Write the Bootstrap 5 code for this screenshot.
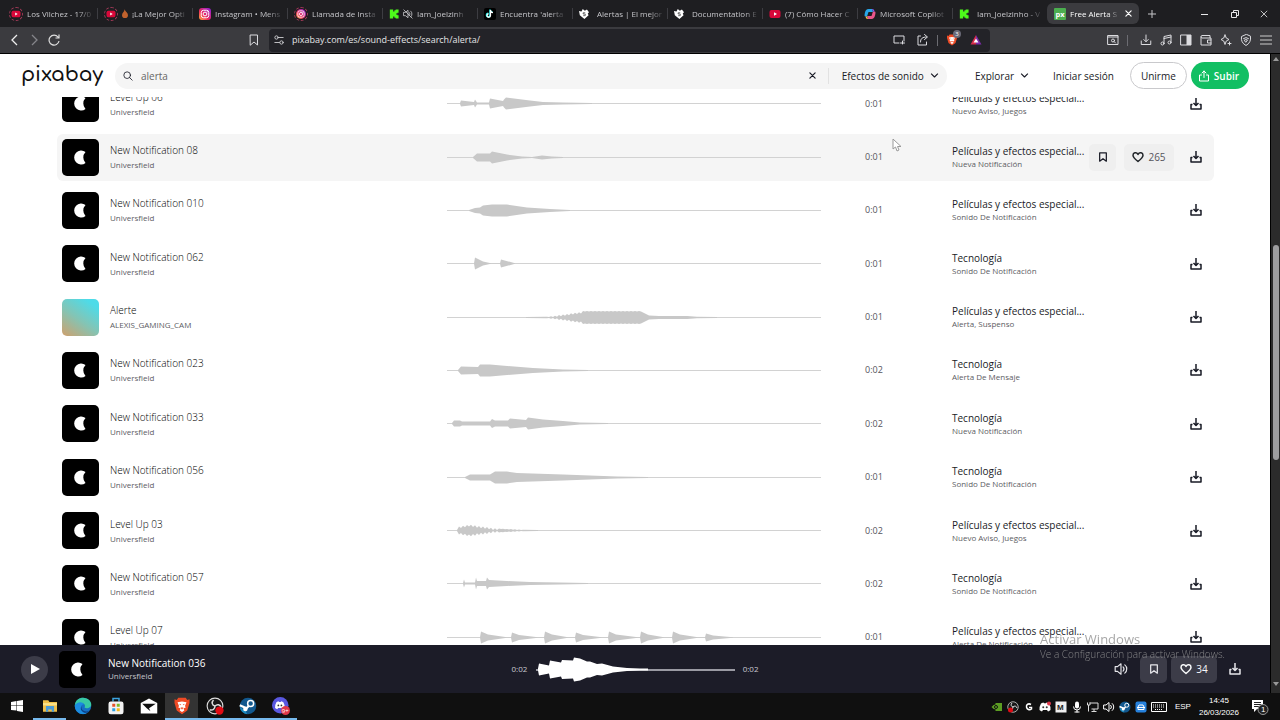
<!DOCTYPE html>
<html lang="es">
<head>
<meta charset="utf-8">
<meta name="viewport" content="width=device-width, initial-scale=1">
<title>Free Alerta Sound Effects - Pixabay</title>
<link href="https://cdn.jsdelivr.net/npm/bootstrap@5.3.0/dist/css/bootstrap.min.css" rel="stylesheet">
<style>
  body { font-family: "Open Sans", "Noto Sans", sans-serif; font-size: 10px; line-height: 14px; color: #191b26; background: #fff; }
  button, input { font: inherit; color: inherit; border: 0; background: none; padding: 0; }
  a { color: inherit; text-decoration: none; }
  svg { display: block; flex: none; }
  .ln { fill: none; stroke: currentColor; stroke-width: 2; stroke-linecap: round; stroke-linejoin: round; }
  .bold-ln { stroke-width: 3; stroke-linecap: butt; }
  .i10 { width: 10px; height: 10px; } .i12 { width: 12px; height: 12px; } .i14 { width: 14px; height: 14px; } .i18 { width: 18px; height: 18px; }

  /* browser window */
  .tab-strip { height: 27px; background: #1e1e21; color: #c6c6ca; font-size: 8px; padding-left: 2px; }
  .tab { flex: 0 1 95px; min-width: 0; height: 21px; padding: 0 3px 0 7px; position: relative; white-space: nowrap; }
  .tab + .tab::before { content: ""; position: absolute; left: 0; top: 5px; height: 11px; border-left: 1px solid #3d3d42; }
  .tab-name { overflow: hidden; -webkit-mask-image: linear-gradient(90deg, #000 80%, transparent 105%); mask-image: linear-gradient(90deg, #000 80%, transparent 105%); }
  .tab.current { background: #3b3b3f; border-radius: 6px; color: #fff; flex-basis: 92px; padding-right: 7px; }
  .tab.current::before { display: none; }
  .ringed { border: 1px dashed #a33a58; border-radius: 50%; padding: 1px; }
  .win-btns { gap: 20px; color: #e8e8ea; }
  .tools { height: 27px; background: #3b3b3f; border-bottom: 1px solid #000; color: #dcdce0; padding: 0 8px; }
  .to-bookmark { margin-left: 188px; }
  .address { height: 23px; flex: 1; background: #232328; border-radius: 4px; padding: 0 8px 0 5px; margin: 0 117px 0 9px; }
  .address input { color: #e3e3e6; font-size: 9px; outline: 0; min-width: 0; }
  .tick { width: 1px; height: 11px; background: #6c6c72; }
  .count { position: absolute; top: -4px; left: 7px; width: 8px; height: 8px; border-radius: 50%; background: #6a6a78; color: #fff; font-size: 6px; line-height: 8px; text-align: center; }

  /* site header */
  .site-head { height: 43px; padding: 0 21px; }
  .brand { font-family: Comfortaa, Lato, sans-serif; font-size: 20px; line-height: 26px; width: 94px; color: #111; font-weight: 600; padding-bottom: 2px; }
  .search { height: 26px; border-radius: 13px; background: #f5f5f5; flex: 1; padding: 0 8px; }
  .search input { color: #666; outline: 0; min-width: 0; }
  .rule { width: 1px; height: 16px; background: #e2e2e2; margin-right: 13px; }
  .drop { gap: 6px; }
  .pill { height: 27px; border-radius: 14px; padding: 0 10px; }
  .join { border: 1px solid #c9c9cc; }
  .upload { background: #12bf63; color: #fff; padding: 0 10px 0 7px; font-weight: 600; }

  /* results: the list is scrolled part way, so both ends are clipped */
  .results { flex: 1; min-height: 0; overflow: hidden; }
  .track-list { height: calc(100% + 39px); margin: -20px 56px 0 57px; }
  .track { flex: 1; min-height: 0; }
  .track-in { display: grid; grid-template-columns: minmax(0, 385fr) minmax(0, 374fr) minmax(0, 131fr) minmax(0, 262fr); align-items: center; height: 47px; width: 100%; padding-left: 5px; border-radius: 6px; }
  .track-in.hovered { background: #f5f5f5; }
  .cover { width: 37px; height: 37px; border-radius: 5px; background: #000; flex: none; }
  .cover.sky { background: linear-gradient(35deg, #d0a06c 0%, #84c4b4 45%, #4edbe8 85%); }
  .by { font-size: 8px; line-height: 12px; color: #5c5c63; }
  .who { margin-left: 11px; padding-top: 2px; }
  .who a { font-weight: 300; color: #000; }
  .who .by { line-height: 16px; }
  .time { padding-left: 44px; font-size: 9px; color: #55555c; }
  .wave { width: 100%; height: 27px; fill: #c8c8c8; }
  .wave line { stroke: #d2d2d2; }
  .mini { width: 27px; height: 27px; border-radius: 5px; background: #efefef; }
  .likes { width: 50px; color: #55555c; }

  /* player */
  .player { height: 48px; background: #1c1c28; color: #e6e6ea; display: grid; grid-template-columns: 1fr 247px 1fr; align-items: center; }
  .player .by { color: #c5c5cb; line-height: 12px; }
  .player .wave { fill: #fff; width: 199px; }
  .player .wave line { stroke: #9a9aa3; stroke-width: 2; }
  .player .mini { background: #3c3c48; }
  .player .likes { width: 46px; }
  .player-now { padding-left: 21px; }
  .play { width: 27px; height: 27px; border-radius: 50%; background: #3c3c48; margin-right: 11px; }
  .edge { font-size: 8px; color: #c9c9d0; }
  .player-tools { padding-right: 29px; }

  .scroll-rail { width: 10px; background: #2b2b2b; border-left: 1px solid #000; }
  .scroll-grip { width: 6px; background: #9d9d9f; border-radius: 3px; flex: 215; }
  .up, .down { border: 3px solid transparent; height: 0; }
  .up { border-bottom: 4px solid #999; } .down { border-top: 4px solid #999; }

  /* desktop */
  .taskbar { height: 27px; background: #101010; color: #fff; }
  .app { width: 33px; height: 27px; border-bottom: 2px solid transparent; }
  .app.open { border-color: #76b9ed; background: #101010; }
  .app.front { background: #333; }
  .tray { font-family: "Liberation Sans", sans-serif; font-size: 8px; line-height: 12px; padding-right: 11px; }
  .notice { position: fixed; right: 55px; bottom: 59px; color: rgba(150,150,150,.85); pointer-events: none; font-size: 10px; font-weight: 300; }
  .notice strong { display: block; font-size: 13px; line-height: 16px; font-weight: 400; }
  .pointer { position: fixed; left: 892px; top: 138px; pointer-events: none; }
</style>
</head>
<body class="vh-100 d-flex flex-column overflow-hidden">

<svg width="0" height="0" class="position-absolute" aria-hidden="true">
  <symbol id="yt" viewBox="0 0 24 24"><rect x="1" y="4" width="22" height="16" rx="4" fill="#d9083a"/><path d="M10 8.500 16 12l-6 3.500z" fill="#fff"/></symbol>
  <symbol id="ig" viewBox="0 0 24 24"><rect width="24" height="24" rx="6" fill="url(#igc)"/><g fill="none" stroke="#fff" stroke-width="2"><rect x="4.500" y="4.500" width="15" height="15" rx="4.500"/><circle cx="12" cy="12" r="3.800"/></g><circle cx="16.500" cy="7.500" r="1.200" fill="#fff"/></symbol>
  <linearGradient id="igc" x1="0" y1="1" x2="1" y2="0"><stop stop-color="#fdb03c"/><stop offset=".4" stop-color="#ee2a5b"/><stop offset="1" stop-color="#8a20e0"/></linearGradient>
  <symbol id="kick" viewBox="0 0 24 24"><path fill="#4dfc1a" d="M2 1h8v5h3V3h3V1h7v8h-3v2h-3v2h3v2h3v8h-7v-2h-3v-3h-3v5H2z"/></symbol>
  <symbol id="tt" viewBox="0 0 24 24"><rect width="24" height="24" rx="4" fill="#000"/><path d="M13 4v11a3.500 3.500 0 1 1-3.500-3.500M13 4c0 3 2 5 5 5" fill="none" stroke="#25f4ee" stroke-width="3" transform="translate(-1 -1)"/><path d="M13 4v11a3.500 3.500 0 1 1-3.500-3.500M13 4c0 3 2 5 5 5" fill="none" stroke="#fff" stroke-width="2.500"/></symbol>
  <symbol id="se" viewBox="0 0 24 24"><path fill="#fff" d="m9 0 5 4 5-3 5 7-3 3 2 4-10 9L2 15 0 5l6 1z"/><path d="M15 9h-5v3h5v4h-5" fill="none" stroke="#222" stroke-width="1.500"/></symbol>
  <symbol id="cop" viewBox="0 0 24 24"><path d="M9 2h7l2 6H9l-3 9H3c-3 0-2-4-1-8s3-7 7-7z" fill="#28a7e8"/><path d="M15 22H8l-2-6h9l3-9h3c3 0 2 4 1 8s-3 7-7 7z" fill="#e9568a"/><path d="m16 2 2 5h3c-1-4-2-5-5-5z" fill="#8a56f0"/><path d="m8 22-2-5H3c1 4 2 5 5 5z" fill="#f4c63d"/></symbol>
  <symbol id="dl" viewBox="0 0 24 24"><path class="ln" d="M12 2v13M7.500 11l4.500 4.500 4.500-4.500M2.500 14v7h19v-7"/></symbol>
  <symbol id="dlb" viewBox="0 0 24 24"><path class="ln bold-ln" d="M12 0v15M7 10l5 5 5-5M5 13H2v9h20v-9h-3"/></symbol>
  <symbol id="bm" viewBox="0 0 24 24"><path class="ln" d="M5 2h14v20l-7-6-7 6z"/></symbol>
  <symbol id="bmb" viewBox="0 0 24 24"><path class="ln bold-ln" d="M4 2h16v20l-8-6-8 6z"/></symbol>
  <symbol id="ht" viewBox="0 0 24 24"><path class="ln bold-ln" d="M12 21C5 15.500 2 12.500 2 8.500 2 3.500 9 1 12 7c3-6 10-3.500 10 1.500 0 4-3 7-10 12.500z"/></symbol>
  <symbol id="chev" viewBox="0 0 24 24"><path class="ln bold-ln" d="m3 7 9 9 9-9"/></symbol>
  <symbol id="x" viewBox="0 0 24 24"><path class="ln" style="stroke-width:4" d="m3 3 18 18M21 3 3 21"/></symbol>
  <symbol id="spk" viewBox="0 0 24 24"><path class="ln" d="M2 8h4l6-5v18l-6-5H2zM15.500 8.500a5 5 0 0 1 0 7M18.500 5a9 9 0 0 1 0 14"/></symbol>
  <symbol id="moon" viewBox="0 0 37 37"><path d="M23.500 13a7 7 0 1 0 0 11 8 8 0 0 1 0-11z" fill="#fff"/></symbol>
  <symbol id="brave" viewBox="0 0 24 24"><path fill="#ee4a25" d="M7 1h10l2 3 3-1 0 5-3 10-7 5-7-5L2 8l0-5 3 1z"/><path fill="#fff" d="m6 7 6-1 6 1-2 5 1 2-3 1 1 3-3 2-3-2 1-3-3-1 1-2z"/><path fill="#ee4a25" d="m8 9 3 1-1 1zM16 9l-3 1 1 1zM10 14h4l-2 3z"/></symbol>
  <symbol id="obs" viewBox="0 0 24 24"><circle cx="12" cy="12" r="10.500" fill="#191919" stroke="#ddd" stroke-width="1.500"/><path d="M12 12C8 11 7 7 10 4M12 12c3-3 7-2 8 2M12 12c0 4-3 6-7 5" fill="none" stroke="#ddd" stroke-width="2"/></symbol>
  <symbol id="steam" viewBox="0 0 24 24"><circle cx="12" cy="12" r="11" fill="#12588e"/><path d="M1 13a11 11 0 0 0 10 10l-2-4z" fill="#1d8bc0"/><circle cx="15.500" cy="8.500" r="4" fill="#12588e" stroke="#fff" stroke-width="2"/><path d="m1 11 9 4 3-3" fill="none" stroke="#fff" stroke-width="3"/><circle cx="8.500" cy="16" r="3" fill="#fff"/></symbol>
  <symbol id="disc" viewBox="0 0 24 24"><path fill="currentColor" d="M4 5q4-2 5-2l1 1.500h4L15 3q1 0 5 2 4 7 3 13-3 2-5 3l-2-3H8l-2 3q-2-1-5-3-1-6 3-13z"/><circle cx="8.500" cy="12.500" r="2" fill="#333"/><circle cx="15.500" cy="12.500" r="2" fill="#333"/></symbol>
</svg>

<nav class="tab-strip d-flex align-items-center" aria-label="Pestañas">
  <a href="#" class="tab d-flex align-items-center gap-1"><svg class="i14 ringed"><use href="#yt"/></svg><span class="tab-name">Los Vilchez - 17/0</span></a>
  <a href="#" class="tab d-flex align-items-center gap-1"><svg class="i14 ringed"><use href="#yt"/></svg><svg width="6" height="9" viewBox="0 0 7 10"><path d="M3 0c1 3 4 4 4 7a3 3 0 0 1-7 0c0-3 3-4 3-7z" fill="#c1622d"/></svg><span class="tab-name">¡La Mejor Opti</span></a>
  <a href="#" class="tab d-flex align-items-center gap-1"><svg class="i12"><use href="#ig"/></svg><span class="tab-name">Instagram • Mens</span></a>
  <a href="#" class="tab d-flex align-items-center gap-1"><svg class="i14 ringed"><use href="#ig"/></svg><span class="tab-name">Llamada de Insta</span></a>
  <a href="#" class="tab d-flex align-items-center gap-1"><svg class="i10"><use href="#kick"/></svg><svg class="i10" viewBox="0 0 24 24"><use href="#spk"/><path class="ln" d="M2 2l20 20"/></svg><span class="tab-name">Iam_Joelzinh</span></a>
  <a href="#" class="tab d-flex align-items-center gap-1"><svg class="i12"><use href="#tt"/></svg><span class="tab-name">Encuentra 'alerta</span></a>
  <a href="#" class="tab d-flex align-items-center gap-1"><svg class="i10 me-1"><use href="#se"/></svg><span class="tab-name">Alertas | El mejor</span></a>
  <a href="#" class="tab d-flex align-items-center gap-1"><svg class="i10 me-1"><use href="#se"/></svg><span class="tab-name">Documentation E</span></a>
  <a href="#" class="tab d-flex align-items-center gap-1"><svg class="i12"><use href="#yt"/></svg><span class="tab-name">(7) Cómo Hacer C</span></a>
  <a href="#" class="tab d-flex align-items-center gap-1"><svg class="i12"><use href="#cop"/></svg><span class="tab-name">Microsoft Copilot</span></a>
  <a href="#" class="tab d-flex align-items-center gap-1"><svg class="i10 me-1"><use href="#kick"/></svg><span class="tab-name">Iam_Joelzinho - V</span></a>
  <a href="#" class="tab current d-flex align-items-center gap-1"><svg class="i12" viewBox="0 0 24 24"><rect width="24" height="24" rx="2" fill="#4bae4f"/><text x="3" y="17" font-size="15" font-weight="700" fill="#fff">px</text></svg><span class="tab-name">Free Alerta S</span><svg width="7" height="7" class="ms-auto"><use href="#x"/></svg></a>
  <button class="ms-2" aria-label="Nueva pestaña"><svg class="i10" viewBox="0 0 10 10"><path d="M5 1v8M1 5h8" stroke="#c6c6ca"/></svg></button>
  <div class="win-btns d-flex ms-auto pe-2 me-1">
    <button aria-label="Minimizar"><svg class="i10" viewBox="0 0 10 10"><path d="M1 5.500h7" stroke="#e8e8ea"/></svg></button>
    <button aria-label="Restaurar"><svg class="i10" viewBox="0 0 10 10"><path d="M1.500 3.500h5v5h-5zM3.500 3V1.500h5v5H7" fill="none" stroke="#e8e8ea"/></svg></button>
    <button aria-label="Cerrar"><svg width="8" height="10" viewBox="0 0 10 10"><path d="m1 1 8 8M9 1 1 9" stroke="#e8e8ea"/></svg></button>
  </div>
</nav>

<div class="tools d-flex align-items-center">
  <div class="d-flex gap-2">
    <button aria-label="Atrás"><svg class="i12" viewBox="0 0 12 12"><path d="M9 1 4 6l5 5" fill="none" stroke="#eee" stroke-width="1.300"/></svg></button>
    <button aria-label="Adelante"><svg class="i12" viewBox="0 0 12 12"><path d="m4 1 5 5-5 5" fill="none" stroke="#85858a" stroke-width="1.300"/></svg></button>
    <button aria-label="Recargar"><svg class="i12" viewBox="0 0 12 12"><path d="M11 7a5 5 0 1 1-1-4l1 1M11 .5V4H7.500" fill="none" stroke="#ddd" stroke-width="1.200"/></svg></button>
  </div>
  <button class="to-bookmark" aria-label="Marcador"><svg class="i12"><use href="#bm"/></svg></button>
  <div class="address d-flex align-items-center gap-2">
    <svg class="i10" viewBox="0 0 24 24"><path class="ln" d="M11 6h11M13 18H2"/><circle class="ln" cx="6" cy="6" r="4"/><circle class="ln" cx="18" cy="18" r="4"/></svg>
    <input class="flex-grow-1" aria-label="Dirección" value="pixabay.com/es/sound-effects/search/alerta/">
    <button class="me-1" aria-label="Instalar"><svg class="i12" viewBox="0 0 24 24"><path class="ln" d="M12 18H2V4h20v10M15 18h8M19 14v6"/></svg></button>
    <button aria-label="Compartir"><svg class="i12" viewBox="0 0 24 24"><path class="ln" d="M7 4H2v18h17v-6M7 16c0-7 4-10 12-10M15 1l6 5-6 5"/></svg></button>
    <div class="d-flex align-items-center gap-2">
      <span class="tick"></span>
      <button class="position-relative me-1" aria-label="Escudos"><svg class="i12"><use href="#brave"/></svg><span class="count">3</span></button>
      <button aria-label="Rewards"><svg class="i12" viewBox="0 0 24 24"><path fill="#d52b4a" d="M12 2 1 21h11z"/><path fill="#7b2ba8" d="m12 2 11 19H12z"/><path fill="#fff" d="m12 9 5 8H7z"/></svg></button>
    </div>
  </div>
  <div class="d-flex gap-2 align-items-center">
    <button aria-label="Buscar"><svg class="i12" viewBox="0 0 24 24"><path class="ln" d="M2 3h20v18H2zM2 6h20"/><circle class="ln" cx="12" cy="13" r="3"/><path class="ln" d="m14 15 3 3"/></svg></button>
    <span class="tick me-1"></span>
    <button aria-label="Descargas"><svg class="i12"><use href="#dl"/></svg></button>
    <button aria-label="Música"><svg class="i12" viewBox="0 0 24 24"><path class="ln" d="M8 19V5l14-3v14M8 9l14-3"/><circle class="ln" cx="5" cy="19" r="3"/><circle class="ln" cx="19" cy="17" r="3"/></svg></button>
    <button aria-label="Panel"><svg class="i12" viewBox="0 0 24 24"><path class="ln" d="M2 2h20v20H2z"/><path fill="currentColor" d="M13 2h9v20h-9z"/></svg></button>
    <button aria-label="Cartera"><svg class="i12" viewBox="0 0 24 24"><path class="ln" d="M20 8V3H4C1 3 2 8 4 8h18v14H2V6M22 12h-7v6h7"/></svg></button>
    <button aria-label="Leo"><svg class="i12" viewBox="0 0 24 24"><path class="ln" d="M10 2q1 8 8 9-7 1-8 10-1-9-8-10 7-1 8-9zM19 16v6M16 19h6"/></svg></button>
    <button aria-label="VPN"><svg class="i12" viewBox="0 0 24 24"><path class="ln" d="M12 1 3 5q-2 12 9 18 11-6 9-18zM7 9q5-4 10 0M9 12q3-2 6 0l-3 4z"/></svg></button>
    <button aria-label="Menú"><svg class="i12" viewBox="0 0 12 12"><path d="M0 2h12M0 6h12M0 10h12" stroke="#ccc"/></svg></button>
  </div>
</div>

<div class="d-flex flex-grow-1" style="min-height:0">
  <div class="d-flex flex-column flex-grow-1" style="min-width:0">
    <header class="site-head d-flex align-items-center">
      <a href="#" class="brand">pixabay</a>
      <form class="search d-flex align-items-center">
        <svg class="i10" viewBox="0 0 24 24"><circle class="ln" cx="10" cy="10" r="8"/><path class="ln" d="m16 16 6 6"/></svg>
        <input class="flex-grow-1 ms-2" aria-label="Buscar" value="alerta">
        <button type="button" class="me-2 pe-1" aria-label="Borrar"><svg width="7" height="7"><use href="#x"/></svg></button>
        <span class="rule"></span>
        <button type="button" class="drop d-flex align-items-center">Efectos de sonido <svg width="9" height="9"><use href="#chev"/></svg></button>
      </form>
      <button class="drop d-flex align-items-center ms-4 ps-1">Explorar <svg width="9" height="9"><use href="#chev"/></svg></button>
      <a href="#" class="mx-3 ps-2">Iniciar sesión</a>
      <button class="pill join me-1">Unirme</button>
      <button class="pill upload d-flex align-items-center gap-1"><svg class="i12" viewBox="0 0 24 24"><path class="ln" d="M12 15V2M8 6l4-4 4 4M7 10H3v12h18V10h-4"/></svg>Subir</button>
    </header>

    <main class="results"><div class="track-list d-flex flex-column" id="tracks"></div></main>

    <footer class="player">
      <div class="player-now d-flex align-items-center">
        <button class="play d-flex align-items-center justify-content-center" aria-label="Reproducir"><svg class="i10" viewBox="0 0 10 10"><path d="M1 0l9 5-9 5z" fill="#fff"/></svg></button>
        <svg class="cover me-2"><use href="#moon"/></svg>
        <div class="ps-1"><div class="text-white">New Notification 036</div><div class="by">Universfield</div></div>
      </div>
      <div class="d-flex align-items-center justify-content-between"><span class="edge">0:02</span><span id="now"></span><span class="edge">0:02</span></div>
      <div class="player-tools d-flex align-items-center justify-content-end">
        <button class="me-2" aria-label="Volumen"><svg class="i14"><use href="#spk"/></svg></button>
        <button class="mini d-flex align-items-center justify-content-center ms-1" aria-label="Guardar"><svg class="i10"><use href="#bmb"/></svg></button>
        <button class="mini likes text-light d-flex align-items-center justify-content-center gap-1 mx-1"><svg class="i12"><use href="#ht"/></svg>34</button>
        <button class="ms-2" aria-label="Descargar"><svg class="i12"><use href="#dlb"/></svg></button>
      </div>
    </footer>
  </div>
  <div class="scroll-rail d-flex flex-column align-items-center" aria-hidden="true">
    <span class="up"></span><span style="flex:183"></span><span class="scroll-grip"></span><span style="flex:221"></span><span class="down mb-1"></span>
  </div>
</div>

<footer class="taskbar d-flex align-items-center">
  <button class="app d-flex align-items-center justify-content-center" aria-label="Inicio"><svg class="i12" viewBox="0 0 24 24"><path fill="#fff" d="M0 4l11-2v9H0zM12 2l12-2v11H12zM0 12h11v9L0 20zM12 12h12v12l-12-2z"/></svg></button>
  <button class="app open d-flex align-items-center justify-content-center" aria-label="Explorador"><svg class="i14" viewBox="0 0 24 24"><path fill="#f0c04a" d="M0 2h9l2 3h13v17H0z"/><path fill="#fbe28a" d="M0 7h24v4H0z"/><path fill="#4b9cd8" d="M5 12h14v10h-4v-4H9v4H5z"/></svg></button>
  <button class="app d-flex align-items-center justify-content-center" aria-label="Edge"><svg class="i18" viewBox="0 0 24 24"><circle cx="12" cy="12" r="11" fill="#1670c4"/><path d="M1 11C2 4 7 1 12 1c7 0 11 5 11 9 0 5-7 6-9 4 3-5-5-9-13-3z" fill="#38c9a4"/><path d="M1 11c4-5 11-5 12-1-5-1-6 9 4 12C7 25 1 19 1 11z" fill="#1b8ce0"/><path d="M10 12c-1 6 5 9 11 6-3 3-7 4-9 2-3-2-4-5-2-8z" fill="#0c3f86"/></svg></button>
  <button class="app d-flex align-items-center justify-content-center" aria-label="Store"><svg class="i18" viewBox="0 0 24 24"><path d="M8 6V2h8v4" fill="none" stroke="#3ba4e0" stroke-width="2"/><rect x="2" y="6" width="20" height="17" rx="3" fill="#f3f3f3"/><path fill="#e5532c" d="M7 9h4v4H7z"/><path fill="#7bb828" d="M13 9h4v4h-4z"/><path fill="#2a9fe0" d="M7 15h4v4H7z"/><path fill="#f5b81c" d="M13 15h4v4h-4z"/></svg></button>
  <button class="app d-flex align-items-center justify-content-center" aria-label="Correo"><svg class="i18" viewBox="0 0 24 24"><path fill="#fff" d="m1 8 11-6 11 6v14H1z"/><path fill="#101010" d="m3 9 18 0-9 6 2 4-5-4z"/></svg></button>
  <button class="app open front d-flex align-items-center justify-content-center" aria-label="Brave"><svg class="i18"><use href="#brave"/></svg></button>
  <button class="app open d-flex align-items-center justify-content-center" aria-label="OBS"><svg class="i18" viewBox="0 0 24 24"><use href="#obs"/><circle cx="18" cy="18" r="5.500" fill="#e00b14"/></svg></button>
  <button class="app open d-flex align-items-center justify-content-center" aria-label="Steam"><svg class="i18"><use href="#steam"/></svg></button>
  <button class="app open d-flex align-items-center justify-content-center" aria-label="Discord"><svg class="i18" viewBox="0 0 24 24"><circle cx="11" cy="11" r="11" fill="#5a58e0"/><g color="#fff"><use href="#disc" x="3" y="4" width="15" height="14"/></g><circle cx="18" cy="18" r="6" fill="#e0384a"/><text x="13" y="21" font-size="8" fill="#fff">9+</text></svg></button>

  <div class="tray d-flex align-items-center gap-1 ms-auto">
    <svg class="i12" viewBox="0 0 24 24"><path fill="#5c9d22" d="M9 4h13v16H9zM1 12q5-7 12-5v10Q5 18 1 12z"/><circle cx="10" cy="12" r="3" fill="none" stroke="#111" stroke-width="2"/></svg>
    <svg class="i12" viewBox="0 0 24 24"><use href="#obs"/><circle cx="7" cy="18" r="5" fill="#e00b14"/></svg>
    <svg class="i12" viewBox="0 0 24 24"><path d="M16 7C11 4 6 7 7 12s6 7 10 4v-3h-5" fill="none" stroke="#fff" stroke-width="3"/></svg>
    <svg class="i12" viewBox="0 0 24 24"><use href="#disc"/><circle cx="20" cy="5" r="4" fill="#e0384a"/></svg>
    <svg class="i12" viewBox="0 0 24 24"><path fill="#eee" d="M1 1h22v22H1z"/><text x="4" y="18" font-size="16" font-weight="700" fill="#222">M</text></svg>
    <svg class="i12" viewBox="0 0 24 24"><rect x="8" y="1" width="8" height="14" rx="4" fill="#fff"/><path d="M5 11q0 7 7 7t7-7M12 18v5M7 22h10" fill="none" stroke="#fff" stroke-width="2"/></svg>
    <svg class="i12" viewBox="0 0 24 24"><path d="M5 4h17v12H9M14 16v5M9 21h10M1 3v5h5V3M3 8v13" fill="none" stroke="#ddd" stroke-width="2"/></svg>
    <svg class="i12"><use href="#spk"/></svg>
    <svg class="i12"><use href="#steam"/></svg>
    <svg class="i12" viewBox="0 0 24 24"><rect x="1" y="1" width="22" height="22" rx="4" fill="#2681dc"/><path d="M4 13h16M8 8h8l2 4v5H6v-5z" fill="none" stroke="#fff" stroke-width="2"/></svg>
    <svg width="16" height="10" viewBox="0 0 16 10"><path d="M.5.5h15v9H.5z" fill="none" stroke="#fff"/><path d="M2 3h12M2 5h12M4 7.500h8" stroke="#fff" stroke-dasharray="1 1"/></svg>
    <span class="ps-1">ESP</span>
    <time class="text-center px-1">14:45<br>26/03/2026</time>
    <svg width="18" height="16" viewBox="0 0 18 16" class="ms-1"><path fill="#fff" d="M1 1h11v9H6l-3 3v-3H1z"/><path d="M3 3.500h7M3 5.500h7M3 7.500h5" stroke="#222"/><circle cx="12" cy="10.500" r="5" fill="#222" stroke="#999"/><text x="10" y="13" font-size="8" fill="#fff">1</text></svg>
  </div>
</footer>

<div class="notice"><strong>Activar Windows</strong>Ve a Configuración para activar Windows.</div>
<svg class="pointer" width="10" height="14" viewBox="0 0 10 14"><path d="M1 1v10l2.500-2 1.500 4 2-1-1.500-3.500H9z" fill="#fff" stroke="#999"/></svg>

<script src="https://cdn.jsdelivr.net/npm/bootstrap@5.3.0/dist/js/bootstrap.bundle.min.js"></script>
<script>
  const FX = 'Películas y efectos especial...', TEC = 'Tecnología', SN = 'Sonido De Notificación';

  // Envelopes are [position, half height] pairs along the line.
  const jag = (from, to, height, depth) => {
    const pts = [];
    for (let x = from; x <= to; x += 2) pts.push([x, Math.max(.5, height(x) - (x / 2 % 2 ? depth : 0))]);
    return pts;
  };
  const tri = list => list.flatMap(([x, h, end]) => [[x, .3], [x + 1, h], [x + 8, h * .5], [end, .3]]);
  const tracks = [
    ['Level Up 06', 'Universfield', '0:01', FX, 'Nuevo Aviso, Juegos', [[13,.5],[14,3],[27,1.500],[28,4],[30,1],[42,1],[43,5],[56,2.500],[57,4],[59,6],[83,3],[96,1.500],[116,1],[145,.5]]],
    ['New Notification 08', 'Universfield', '0:01', FX, 'Nueva Notificación', [[26,.5],[30,4],[43,4],[45,6],[60,3],[75,1],[85,.5],[95,2],[105,1],[116,.5]]],
    ['New Notification 010', 'Universfield', '0:01', FX, SN, [[22,.5],[28,2.500],[33,3],[36,5],[45,6],[60,6],[80,3],[103,1.500],[123,.5]]],
    ['New Notification 062', 'Universfield', '0:01', TEC, SN, [[27,.3],[28,6],[36,2],[44,.3],[53,.3],[54,4],[68,.3]]],
    ['Alerte', 'ALEXIS_GAMING_CAM', '0:01', FX, 'Alerta, Suspenso', [[79,.5],[98,.8],...jag(100,134,x => (x-95)/7,1.500),...jag(136,194,x => 6.500,.5),[202,2],[212,1.500],[240,1.500],[250,.8],[270,.5]]],
    ['New Notification 023', 'Universfield', '0:02', TEC, 'Alerta De Mensaje', [[11,.5],[14,4],[31,3.500],[33,6],[43,6],[86,2.500],[116,1],[141,.5]]],
    ['New Notification 033', 'Universfield', '0:02', TEC, 'Nueva Notificación', [[5,.5],[7,3],[13,3],[15,2],[43,2],[45,4.500],[48,3],[61,3],[63,5],[79,3.500],[81,6],[96,4],[116,2.500],[133,1],[161,.5]]],
    ['New Notification 056', 'Universfield', '0:01', TEC, SN, [[18,.5],[23,3],[43,3],[48,6],[60,6],[70,4.500],[116,3],[170,1],[201,.5]]],
    ['Level Up 03', 'Universfield', '0:02', FX, 'Nuevo Aviso, Juegos', [[10,.5],...jag(12,50,x => x < 22 ? 4 + (x-12)/5 : 6 - (x-22)/7,2),...jag(52,76,x => 2 - (x-52)/20,.5),[91,.5]]],
    ['New Notification 057', 'Universfield', '0:02', TEC, SN, [[16,.5],[17,4],[18,1],[28,1],[29,6],[30,2.500],[39,2.500],[40,6],[42,3.500],[60,2.500],[83,1.500],[113,1],[141,.5]]],
    ['Level Up 07', 'Universfield', '0:01', FX, 'Alerta De Notificación', tri([[33,6,60],[64,5,91],[97,6,121],[128,5,155],[161,6,191],[193,6,217],[225,6,251],[258,4,286]])]
  ];
  const wave = (pts, w) => {
    const top = pts.map(([x, h]) => `${x},${13.5 - h}`), low = pts.map(([x, h]) => `${x},${13.5 + h}`).reverse();
    return `<svg class="wave" viewBox="0 0 ${w} 27" preserveAspectRatio="none" shape-rendering="crispEdges" aria-hidden="true"><line x1="0" y1="13.5" x2="${w}" y2="13.5"/><polygon shape-rendering="auto" points="${top.concat(low).join(' ')}"/></svg>`;
  };
  document.getElementById('tracks').innerHTML = tracks.map(([name, by, time, kind, tags, pts]) => {
    const hot = name === 'New Notification 08';
    const extras = hot ? `<button class="mini d-flex align-items-center justify-content-center me-2" aria-label="Guardar"><svg class="i10"><use href="#bmb"/></svg></button>
      <button class="mini likes d-flex align-items-center justify-content-center gap-1 me-2"><svg class="i12 text-dark"><use href="#ht"/></svg>265</button>` : '';
    return `<article class="track d-flex align-items-center"><div class="track-in ${hot ? 'hovered' : ''}">
      <div class="d-flex align-items-center"><svg class="cover ${name === 'Alerte' ? 'sky' : ''}">${name === 'Alerte' ? '' : '<use href="#moon"/>'}</svg>
        <div class="who"><a href="#" class="d-block">${name}</a><div class="by">${by}</div></div></div>
      ${wave(pts, 374)}
      <div class="time">${time}</div>
      <div class="d-flex align-items-center"><div class="me-auto text-nowrap"><a href="#" class="d-block">${kind}</a><div class="by">${tags}</div></div>
        ${extras}<button class="ms-2 me-2 pe-1" aria-label="Descargar"><svg class="i12"><use href="#dlb"/></svg></button></div>
    </div></article>`;
  }).join('');
  document.getElementById('now').innerHTML = wave([[2,1],[3,6],[13,4],[14,9],[25,7],[26,9.500],[37,9],[38,12],[44,11],[51,8],[54,8],[61,5.500],[66,6],[77,3],[91,1.500],[104,1],[112,1]], 199);
</script>
</body>
</html>
